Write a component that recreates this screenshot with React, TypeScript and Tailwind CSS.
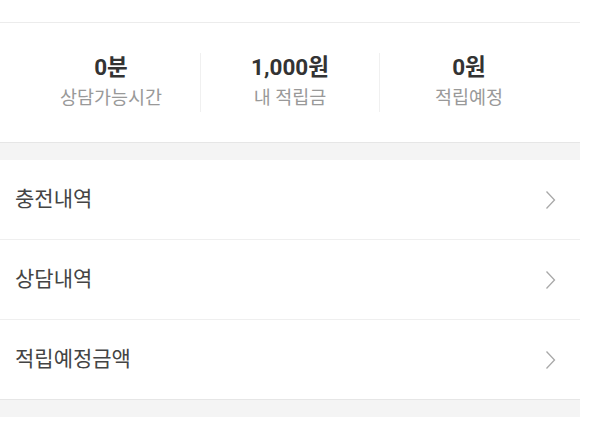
import React from 'react'

const stats = [
  { value: '0분', label: '상담가능시간' },
  { value: '1,000원', label: '내 적립금' },
  { value: '0원', label: '적립예정' },
]

const menus = ['충전내역', '상담내역', '적립예정금액']

const Chevron: React.FC = () => (
  <svg width="11" height="20" viewBox="0 0 11 20" fill="none" className="text-[#a8a8a8]">
    <path d="M1.5 1.5 L9.5 10 L1.5 18.5" stroke="currentColor" strokeWidth="1.3" />
  </svg>
)

const App: React.FC = () => {
  return (
    <div className="w-[589px] h-[425px] bg-white overflow-hidden font-['Roboto','Noto_Sans_CJK_KR',sans-serif]">
      <div className="w-[580px]">
        <div className="h-[23px] border-b border-[#ececec]" />

        <div className="h-[120px] flex items-center px-[22px] border-b border-[#e6e6e6]">
          {stats.map((s, i) => (
            <div
              key={s.label}
              className={`flex-1 flex flex-col items-center ${i > 0 ? 'border-l border-[#f0f0f0]' : ''}`}
            >
              <p className="text-[22.5px] leading-[28px] font-bold text-[#333]">{s.value}</p>
              <p className="text-[18.5px] leading-[28px] text-[#999] mt-[3px]">{s.label}</p>
            </div>
          ))}
        </div>

        <div className="h-[17px] bg-[#f4f4f4]" />

        {menus.map((m, i) => (
          <div
            key={m}
            className={`h-[80px] flex items-center justify-between pl-[15px] pr-[24px] ${i < menus.length - 1 ? 'border-b border-[#efefef]' : 'border-b border-[#e6e6e6]'}`}
          >
            <span className="text-[21px] text-[#444]">{m}</span>
            <Chevron />
          </div>
        ))}

        <div className="h-[17px] bg-[#f4f4f4]" />
      </div>
    </div>
  )
}

export default App
